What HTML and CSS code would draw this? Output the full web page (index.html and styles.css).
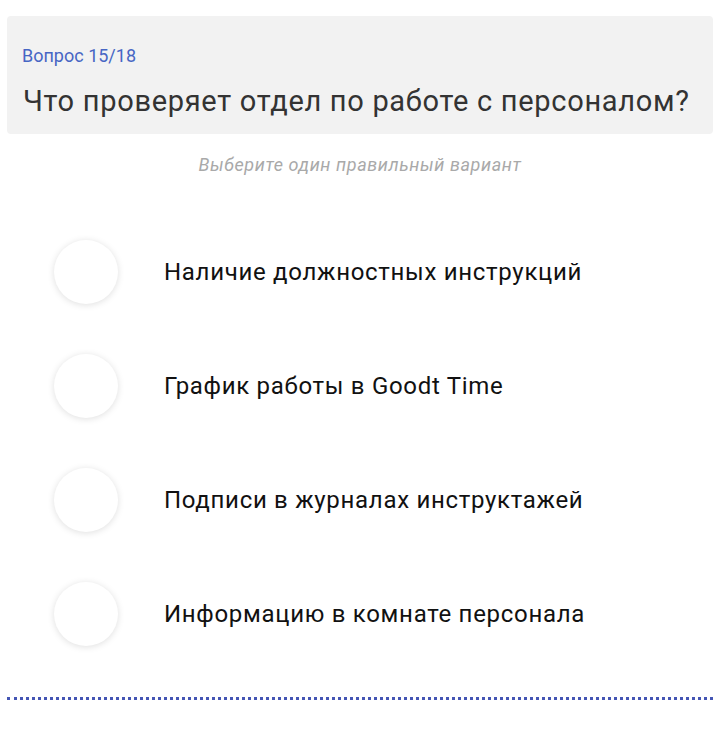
FILE: index.html
```html
<!DOCTYPE html>
<html lang="ru">
  <head>
    <meta charset="UTF-8" />
    <meta name="viewport" content="width=device-width, initial-scale=1.0" />
    <title>Вопрос 15/18</title>
    <link rel="stylesheet" href="styles.css">
  </head>
  <body>
    <div class="quiz">
      <div class="question-card">
        <div class="counter">Вопрос 15/18</div>
        <h1 class="question">Что проверяет отдел по работе с персоналом?</h1>
      </div>

      <p class="hint">Выберите один правильный вариант</p>

      <ul class="answers">
        <li class="answer">
          <span class="radio"></span>
          <span class="answer-text">Наличие должностных инструкций</span>
        </li>
        <li class="answer">
          <span class="radio"></span>
          <span class="answer-text">График работы в Goodt Time</span>
        </li>
        <li class="answer">
          <span class="radio"></span>
          <span class="answer-text">Подписи в журналах инструктажей</span>
        </li>
        <li class="answer">
          <span class="radio"></span>
          <span class="answer-text">Информацию в комнате персонала</span>
        </li>
      </ul>

      <div class="divider"></div>
    </div>
  </body>
</html>
```

FILE: styles.css
```css
body {
  font-family: Roboto, "Noto Sans", sans-serif;
  background: #ffffff;
  color: #111111;
  margin: 0;
  padding: 0;
}
.quiz {
  padding: 16px 7px 0;
}
.question-card {
  background: #f2f2f2;
  border-radius: 4px;
  height: 118px;
  box-sizing: border-box;
  padding: 28px 16px 0 15px;
}
.counter {
  font-size: 18px;
  line-height: 24px;
  color: #4766c4;
}
.question {
  margin: 15px 0 0 1px;
  font-size: 29px;
  font-weight: 400;
  letter-spacing: 0.7px;
  line-height: 36px;
  color: #333333;
}
.hint {
  margin: 19px 0 0;
  text-align: center;
  font-size: 18px;
  font-style: italic;
  letter-spacing: 0.6px;
  line-height: 24px;
  color: #a9a9a9;
}
.answers {
  list-style: none;
  margin: 63px 0 0;
  padding: 0;
  display: flex;
  flex-direction: column;
  gap: 50px;
}
.answer {
  display: flex;
  align-items: center;
  height: 64px;
  padding-left: 47px;
}
.radio {
  flex: none;
  width: 64px;
  height: 64px;
  border-radius: 50%;
  background: #ffffff;
  box-shadow: 0 1px 7px rgba(0, 0, 0, 0.13);
}
.answer-text {
  margin-left: 46px;
  font-size: 24px;
  letter-spacing: 0.7px;
  color: #111111;
}
.divider {
  margin-top: 51px;
  border-top: 3px dotted #4455b4;
}
```
